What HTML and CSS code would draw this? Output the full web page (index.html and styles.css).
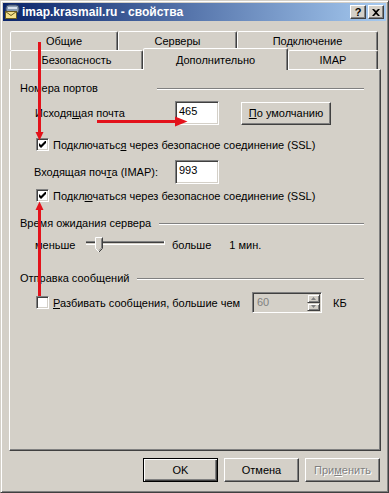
FILE: index.html
```html
<!DOCTYPE html>
<html lang="ru">
<head>
  <meta charset="UTF-8" />
  <title>imap.krasmail.ru - свойства</title>
  <link rel="stylesheet" href="styles.css">
</head>
<body>

  <div class="window">
    <!-- Title bar -->
    <div class="titlebar">
      <svg class="app-icon" width="16" height="16" viewBox="0 0 16 16">
        <rect x="2" y="1" width="13" height="8" rx="3" fill="#8a9cb4" stroke="#3c4a64"/>
        <rect x="4" y="3" width="9" height="2" fill="#d8e0ec"/>
        <rect x="1.5" y="7.5" width="11" height="7" fill="#f4e08a" stroke="#6a5a20"/>
        <path d="M1.5 7.5 L7 11.5 L12.5 7.5" fill="none" stroke="#6a5a20"/>
      </svg>
      <span class="title">imap.krasmail.ru - свойства</span>
      <div class="caption-buttons">
        <span class="cap-btn help">?</span>
        <span class="cap-btn">
          <svg width="8" height="7" viewBox="0 0 8 7"><path d="M0 0h2l2 2 2-2h2L5 3.5 8 7H6L4 5 2 7H0l3-3.5z" fill="#000"/></svg>
        </span>
      </div>
    </div>

    <div class="content">
      <!-- Tabs -->
      <div class="tabs">
        <div class="tab-row">
          <div class="tab w-general">Общие</div>
          <div class="tab w-servers">Серверы</div>
          <div class="tab w-connect">Подключение</div>
        </div>
        <div class="tab-row">
          <div class="tab w-security">Безопасность</div>
          <div class="tab w-advanced selected">Дополнительно</div>
          <div class="tab w-imap">IMAP</div>
        </div>
      </div>

      <!-- Advanced page -->
      <div class="panel">
        <div class="group-title">
          <span class="group-label wide">Номера портов</span>
          <span class="rule"></span>
        </div>

        <div class="field-row outgoing">
          <span class="field-label">Исходя<u>щ</u>ая почта</span>
          <span class="edit">465</span>
          <span class="button default-port"><u>П</u>о умолчанию</span>
        </div>

        <div class="check-row first">
          <span class="checkbox checked"></span>
          <span>Подключатьс<u>я</u> через безопасное соединение (SSL)</span>
        </div>

        <div class="field-row incoming">
          <span class="field-label">Входящая поч<u>т</u>а (IMAP):</span>
          <span class="edit">993</span>
        </div>

        <div class="check-row second">
          <span class="checkbox checked"></span>
          <span>Подкл<u>ю</u>чаться через безопасное соединение (SSL)</span>
        </div>

        <div class="group-title timeout">
          <span class="group-label">Время ожидания сервера</span>
          <span class="rule"></span>
        </div>

        <div class="slider-row">
          <span class="slider-label">меньше</span>
          <svg class="slider" width="82" height="22" viewBox="0 0 82 22">
            <rect x="2" y="7" width="78" height="1" fill="#808080"/>
            <rect x="2" y="8" width="78" height="1" fill="#404040"/>
            <rect x="2" y="9" width="78" height="1" fill="#d4d0c8"/>
            <rect x="2" y="10" width="78" height="1" fill="#fff"/>
            <rect x="80" y="7" width="1" height="4" fill="#fff"/>
            <path d="M11.5 3.5 H18.5 V14.5 L15 18 L11.5 14.5 Z" fill="#d4d0c8" stroke="#fff"/>
            <path d="M18.5 3.5 V14.5 L15 18" fill="none" stroke="#404040"/>
            <path d="M17.5 4.5 V14 L15 16.5" fill="none" stroke="#808080"/>
          </svg>
          <span class="more">больше</span>
          <span class="minutes">1 мин.</span>
        </div>

        <div class="group-title sending">
          <span class="group-label">Отправка сообщений</span>
          <span class="rule"></span>
        </div>

        <div class="split-row">
          <span class="checkbox"></span>
          <span class="split-label"><u>Р</u>азбивать сообщения, большие чем</span>
          <span class="edit spin disabled">
            60
            <span class="spin-buttons">
              <span class="spin-btn"><svg width="5" height="3" viewBox="0 0 5 3"><path d="M2.5 0 L5 3 H0 Z" fill="#808080"/></svg></span>
              <span class="spin-btn"><svg width="5" height="3" viewBox="0 0 5 3"><path d="M0 0 H5 L2.5 3 Z" fill="#808080"/></svg></span>
            </span>
          </span>
          <span class="unit">КБ</span>
        </div>
      </div>

      <!-- Dialog buttons -->
      <div class="dialog-buttons">
        <span class="button default">OK</span>
        <span class="button">Отмена</span>
        <span class="button disabled">При<u>м</u>енить</span>
      </div>
    </div>
  </div>

  <!-- Red arrows drawn on top of the screenshot -->
  <svg class="annotations" width="389" height="493" viewBox="0 0 389 493" aria-hidden="true">
    <g fill="#e3121b" stroke="#e3121b">
      <line x1="39.5" y1="42" x2="39.5" y2="133" stroke-width="3"/>
      <path d="M35.5 132 H43.5 L39.5 140.5 Z" stroke="none"/>
      <line x1="97" y1="121.5" x2="177" y2="121.5" stroke-width="3"/>
      <path d="M175 116.5 V126.5 L187.5 121.5 Z" stroke="none"/>
      <line x1="39.5" y1="296" x2="39.5" y2="209" stroke-width="3"/>
      <path d="M35.5 210 H43.5 L39.5 201.5 Z" stroke="none"/>
    </g>
  </svg>

</body>
</html>
```

FILE: styles.css
```css
/* === Global === */
* {
  box-sizing: border-box;
}

body {
  margin: 0;
  position: relative;
  font-family: "Liberation Sans", Arial, sans-serif;
  font-size: 11px;
  color: #000;
  background: #d4d0c8;
}

u {
  text-decoration: underline;
  text-underline-offset: 1px;
}

/* === Window frame & title bar === */
.window {
  width: 389px;
  height: 493px;
  padding: 2px;
  background: #d4d0c8;
  border: 1px solid;
  border-color: #d4d0c8 #404040 #404040 #d4d0c8;
  box-shadow: inset 1px 1px #fff, inset -1px -1px #808080;
  display: flex;
  flex-direction: column;
}

.titlebar {
  height: 18px;
  display: flex;
  align-items: center;
  padding: 0 2px 0 1px;
  background: linear-gradient(to right, #0a246a, #a6caf0);
}

.app-icon {
  flex: none;
  margin-right: 2px;
}

.title {
  flex: 1;
  color: #fff;
  font-weight: bold;
  font-size: 12px;
  white-space: nowrap;
}

.caption-buttons {
  display: flex;
  gap: 2px;
}

.cap-btn {
  width: 16px;
  height: 14px;
  display: flex;
  align-items: center;
  justify-content: center;
  background: #d4d0c8;
  border: 1px solid;
  border-color: #fff #404040 #404040 #fff;
  box-shadow: inset -1px -1px #808080;
}

.cap-btn.help {
  font-weight: bold;
  font-size: 11px;
  line-height: 12px;
}

/* === Tabs === */
.content {
  flex: 1;
  padding: 10px 5px 0 6px;
  display: flex;
  flex-direction: column;
}

.tabs {
  padding-left: 1px;
}

.tab-row {
  display: flex;
  height: 19px;
}

.tab {
  height: 19px;
  display: flex;
  align-items: center;
  justify-content: center;
  background: #d4d0c8;
  border: 1px solid;
  border-bottom: none;
  border-color: #fff #404040 transparent #fff;
  border-radius: 2px 2px 0 0;
  box-shadow: inset -1px 0 #808080;
  white-space: nowrap;
}

.w-general { width: 108px; }
.w-servers { width: 119px; }
.w-connect { width: 141px; }
.w-security { width: 133px; }
.w-advanced { width: 145px; }
.w-imap { width: 90px; }

.tab.selected {
  position: relative;
  z-index: 1;
  height: 22px;
  margin-top: -2px;
}

/* === Panel === */
.panel {
  height: 382px;
  padding: 12px 16px 0 10px;
  border: 1px solid;
  border-color: #fff #404040 #404040 #fff;
  box-shadow: inset -1px -1px #808080;
  display: flex;
  flex-direction: column;
}

.group-title {
  height: 13px;
  display: flex;
  align-items: center;
  line-height: 13px;
}

.group-label.wide {
  min-width: 137px;
}

.rule {
  flex: 1;
  height: 2px;
  margin-left: 8px;
  border-top: 1px solid #808080;
  border-bottom: 1px solid #fff;
}

.group-label.wide + .rule {
  margin-left: 0;
}

.group-title.timeout { margin-top: 15px; }
.group-title.sending { margin-top: 16px; }

.field-row {
  height: 24px;
  display: flex;
  align-items: center;
}

.field-row.outgoing {
  margin-top: 6px;
  padding-left: 15px;
}

.field-row.incoming {
  margin-top: 9px;
  padding-left: 14px;
}

.field-label {
  width: 140px;
  white-space: nowrap;
}

.field-row.incoming .field-label {
  width: 141px;
}

.edit {
  width: 44px;
  height: 24px;
  padding: 3px 0 0 3px;
  background: #fff;
  border: 1px solid;
  border-color: #808080 #fff #fff #808080;
  box-shadow: inset 1px 1px #404040, inset -1px -1px #d4d0c8;
  align-self: stretch;
}

.button {
  height: 23px;
  display: flex;
  align-items: center;
  justify-content: center;
  background: #d4d0c8;
  border: 1px solid;
  border-color: #fff #404040 #404040 #fff;
  box-shadow: inset -1px -1px #808080;
  white-space: nowrap;
}

.button.default-port {
  width: 90px;
  margin-left: 22px;
}

/* === Checkboxes === */
.check-row {
  height: 13px;
  display: flex;
  align-items: center;
  gap: 4px;
  padding-left: 16px;
  white-space: nowrap;
}

.check-row.first { margin-top: 13px; }
.check-row.second { margin-top: 5px; }

.checkbox {
  flex: none;
  width: 13px;
  height: 13px;
  background: #fff;
  border: 1px solid;
  border-color: #808080 #fff #fff #808080;
  box-shadow: inset 1px 1px #404040, inset -1px -1px #d4d0c8;
}

.checkbox.checked {
  background: #fff url("data:image/svg+xml,%3Csvg xmlns='http://www.w3.org/2000/svg' width='7' height='7'%3E%3Cpath d='M0 2v3l2 2 5-5V-1L2 4z' fill='%23000'/%3E%3C/svg%3E") no-repeat 2px 2px;
}

/* === Slider === */
.slider-row {
  height: 22px;
  margin-top: 4px;
  padding-left: 15px;
  display: flex;
  align-items: center;
  white-space: nowrap;
}

.slider-label {
  width: 49px;
}

.slider {
  flex: none;
}

.more {
  margin-left: 6px;
}

.minutes {
  margin-left: 18px;
}

/* === Split messages row === */
.split-row {
  height: 21px;
  margin-top: 7px;
  padding-left: 16px;
  display: flex;
  align-items: center;
  white-space: nowrap;
}

.split-label {
  width: 203px;
  padding-left: 4px;
}

.edit.spin {
  position: relative;
  width: 70px;
  height: 21px;
  padding: 3px 0 0 4px;
}

.edit.disabled {
  background: #d4d0c8;
  color: #808080;
}

.spin-buttons {
  position: absolute;
  top: 1px;
  right: 1px;
  width: 13px;
  bottom: 1px;
  display: flex;
  flex-direction: column;
}

.spin-btn {
  flex: 1;
  display: flex;
  align-items: center;
  justify-content: center;
  background: #d4d0c8;
  border: 1px solid;
  border-color: #d4d0c8 #404040 #404040 #d4d0c8;
  box-shadow: inset 1px 1px #fff, inset -1px -1px #808080;
}

.unit {
  margin-left: 11px;
}

/* === Dialog buttons === */
.dialog-buttons {
  margin-top: 7px;
  padding-right: 1px;
  display: flex;
  justify-content: flex-end;
  gap: 6px;
}

.dialog-buttons .button {
  width: 75px;
  height: 24px;
}

.button.default {
  border: 1px solid #000;
  box-shadow: inset 1px 1px #fff, inset -1px -1px #404040, inset -2px -2px #808080;
}

.button.disabled {
  color: #808080;
  text-shadow: 1px 1px #fff;
}

/* === Annotations === */
.annotations {
  position: absolute;
  left: 0;
  top: 0;
  pointer-events: none;
}
```
